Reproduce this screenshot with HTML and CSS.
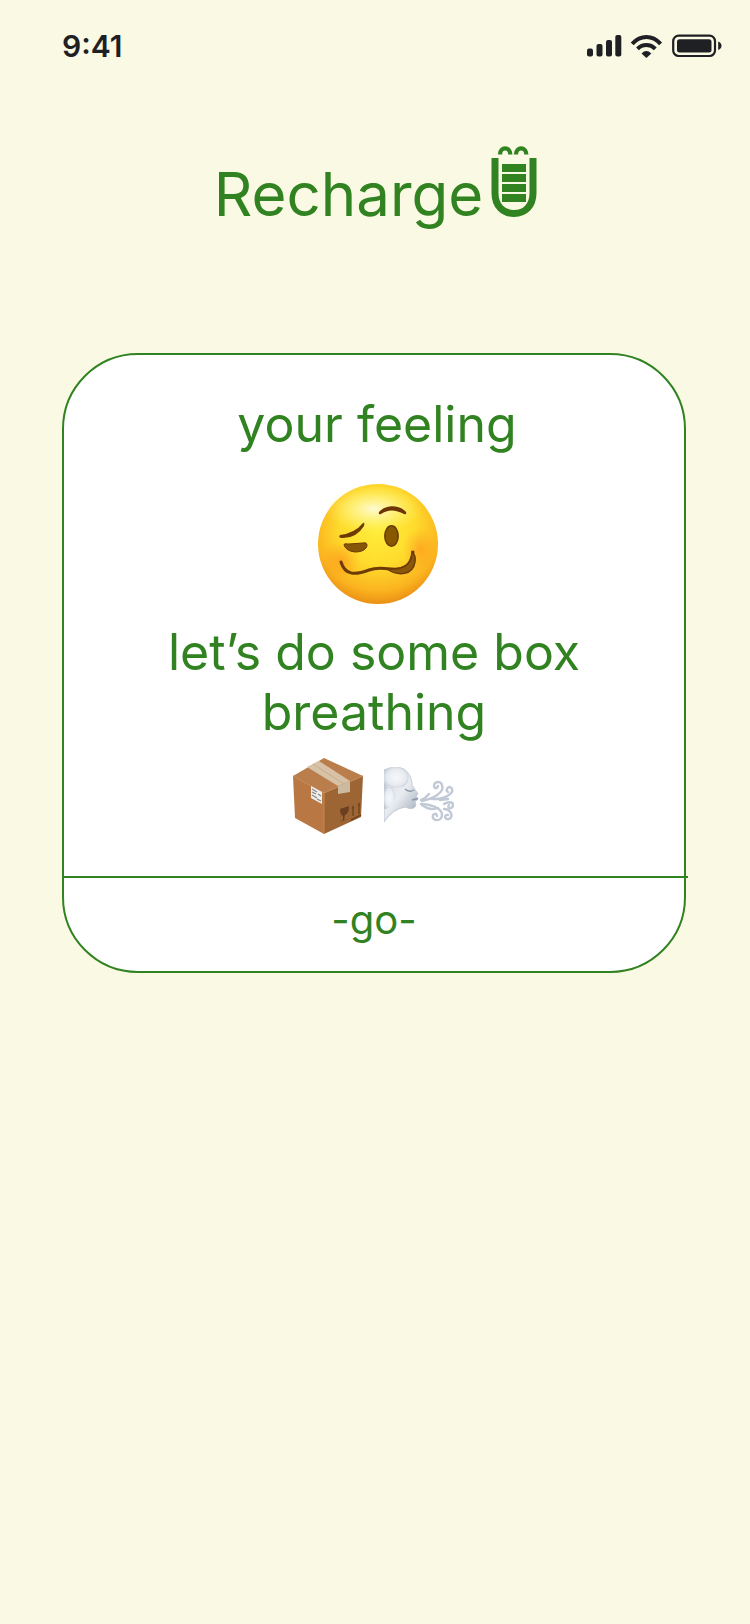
FILE: index.html
```html
<!DOCTYPE html>
<html lang="en">
<head>
<meta charset="utf-8">
<meta name="viewport" content="width=device-width, initial-scale=1">
<title>Recharge</title>
<link rel="stylesheet" href="styles.css">
</head>
<body>
<header class="status">
  <time class="clock">9:41</time>
  <svg class="status-icons" width="136" height="24" viewBox="586 34 136 24" role="img" aria-label="Signal, Wi-Fi and battery">
    <g fill="#1f2024">
      <rect x="587" y="48.500" width="6" height="8" rx="2"/>
      <rect x="596.500" y="44" width="6" height="12.500" rx="2"/>
      <rect x="606" y="40" width="6" height="16.500" rx="2"/>
      <rect x="615.300" y="35" width="6" height="21.500" rx="2"/>
      <path d="M641.500 53.500Q646.400 48.600 651.300 53.500L646.400 57.900Z"/>
      <rect x="677" y="39.200" width="34.500" height="13.200" rx="2.500"/>
      <path d="M718.200 41.500Q721.500 42.800 721.500 45.800T718.200 50.100Z"/>
    </g>
    <g fill="none" stroke="#1f2024">
      <path stroke-width="4" d="M632.200 43.800Q638.500 37 646.400 37T660.600 43.800M637.500 48.800Q641.300 45 646.400 45T655.300 48.800"/>
      <rect x="673.200" y="35.700" width="41.800" height="20.300" rx="5.500" stroke-width="2.200"/>
    </g>
  </svg>
</header>
<main class="page">
  <h1 class="brand">
    <span>Recharge</span>
    <svg class="cup" width="46" height="72" viewBox="0 0 46 72" aria-hidden="true">
      <path d="M4 12V47C4 60 12 67.500 23 67.500S42 60 42 47V12" fill="none" stroke="#318220" stroke-width="7"/>
      <path d="M11 18h24v8H11zM11 28h24v8H11zM11 38h24v8H11zM11 48h24v8H11z" fill="#318220"/>
      <path d="M9 8.500C9 0.300 19.300 0.300 19.300 8.500M25 8.500C25 0.300 35.300 0.300 35.300 8.500" fill="none" stroke="#318220" stroke-width="4.300"/>
    </svg>
  </h1>
  <section class="card">
    <div class="content">
      <h2 class="line feeling">your feeling</h2>
      <svg class="face" width="128" height="122" viewBox="-68 -61 128 122" role="img" aria-label="Woozy face">
        <defs>
          <radialGradient id="skin" cx=".5" cy=".36" r=".66">
            <stop offset="0" stop-color="#ffee3c"/><stop offset=".48" stop-color="#fedb2c"/><stop offset=".8" stop-color="#fbb41f"/><stop offset="1" stop-color="#e88a14"/>
          </radialGradient>
          <radialGradient id="shine">
            <stop offset="0" stop-color="#fffcdc" stop-opacity=".95"/><stop offset=".5" stop-color="#fff79a" stop-opacity=".6"/><stop offset="1" stop-color="#fff36a" stop-opacity="0"/>
          </radialGradient>
          <radialGradient id="blush">
            <stop offset="0" stop-color="#ff861c" stop-opacity=".5"/><stop offset="1" stop-color="#ff901c" stop-opacity="0"/>
          </radialGradient>
        </defs>
        <circle r="60" fill="url(#skin)"/>
        <ellipse cx="-4" cy="-35" rx="48" ry="24" fill="url(#shine)"/>
        <ellipse cx="-37" cy="16" rx="20" ry="19" fill="url(#blush)"/>
        <ellipse cx="42" cy="5" rx="17" ry="22" fill="url(#blush)"/>
        <path d="M-38-9Q-23-11-15-21Q-13-22-14-18Q-22-5-37-6Q-40-7-38-9Z" fill="#6d3a05"/>
        <path d="M1-32C8-40 22-39 28-32Q29-29 26-30Q13-37 3-30Q0-29 1-32Z" fill="#6d3505"/>
        <path d="M-34 1C-34-1-31 0-29 0L-15-1C-11-2-10 1-12 4Q-15 8-23 8Q-32 7-34 1Z" fill="#865608" stroke="#6d3a05" stroke-width="1"/>
        <ellipse cx="13.500" cy="-8" rx="6.700" ry="10.200" fill="#865900" stroke="#6b3b04" stroke-width="1.500"/>
        <path d="M-37 18C-33 32-22 31-9 26C2 22 11 26 20 25Q33 24 35 8" fill="none" stroke="#6d3b05" stroke-width="3" stroke-linecap="round"/>
        <path d="M9 25C27 26 34 20 34 8Q38 11 37 18C35 31 21 33 9 25Z" fill="#8b570b" stroke="#6d3b05" stroke-width="1.500"/>
      </svg>
      <p class="line">let’s do some box breathing</p>
      <div class="pair">
        <svg width="72" height="78" viewBox="0 0 72 78" role="img" aria-label="Package">
          <path d="M1 19L32 1L71 19L32 36Z" fill="#ba7e4c"/>
          <path d="M1 19L32 36V77L3 61Z" fill="#b97843"/>
          <path d="M32 36L71 19L69 60L32 77Z" fill="#9d6434"/>
          <path d="M1 19L32 36L71 19M32 36V77" fill="none" stroke="#c48a56"/>
          <path d="M15 10L27 4L58 24L46 29Z" fill="#d8c2a7"/>
          <path d="M21 7L52 27" stroke="#c9ad8b"/>
          <path d="M46 29L58 24V35L46 37Z" fill="#cdb99d"/>
          <path d="M19 29L30 35V47L19 41Z" fill="#efeeeb"/>
          <path d="M20 32l5 3M20 35l4 2M20 38l5 3M26 37l3 2M25 42l4 2" stroke="#858789" stroke-width="1.200"/>
          <path d="M48 52L57 49Q57 57 53 58L52 63L56 62L48 65L51 63V59Q48 58 48 52Z" fill="#6b4020"/>
          <path d="M61 59V50M67 57V47M59 63L69 58" stroke="#70441f" stroke-width="1.400"/>
          <path d="M59.500 52l1.500-4 1.500 3M65.500 49l1.500-4 1.500 3" fill="#70441f"/>
        </svg>
        <svg width="72" height="58" viewBox="0 0 72 58" role="img" aria-label="Wind blowing face">
          <defs>
            <linearGradient id="cloud" x1="0" y1="0" x2=".8" y2="1">
              <stop offset="0" stop-color="#d9dee6"/><stop offset=".55" stop-color="#e8ecf1"/><stop offset="1" stop-color="#a3acba"/>
            </linearGradient>
            <radialGradient id="puff" cx=".5" cy=".5" r=".6">
              <stop offset="0" stop-color="#f5f7fa"/><stop offset=".65" stop-color="#e7ebf0"/><stop offset="1" stop-color="#c0c8d3"/>
            </radialGradient>
          </defs>
          <path d="M0 3Q12-2 20 2Q28 8 28 18L34 27L32 29L34 32L31 35L32 38Q30 44 21 40Q9 42 0 55Z" fill="url(#cloud)" stroke="#b9c1cd" stroke-width=".8"/>
          <path d="M0 20H8Q15 32 6 39Q4 42 0 42Z" fill="url(#puff)"/>
          <path d="M0 3Q8-2 17 1C29 5 25 21 16 20Q10 22 5 19L0 20Z" fill="url(#puff)"/>
          <path d="M21 22Q25 26 30 23M28 33L34 31.500" fill="none" stroke="#8995a6" stroke-width="1.300"/>
          <g fill="none" stroke="#c0c9d5" stroke-width="2.400" stroke-linecap="round">
            <path d="M37 33Q42 31 45 27M38 34C48 32 61 26 58 18C56 12 47 16 51 21Q53 22 54 19"/>
            <path d="M48 32C59 33 70 27 68 22C66 17 60 23 64 25M56 33L64 32"/>
            <path d="M37 37C47 37 57 41 58 47C59 55 47 55 49 48Q52 45 53 49"/>
            <path d="M38 38Q46 44 54 41M60 37C63 35 69 34 69 38C69 43 62 41 65 38"/>
            <path d="M60 42C67 42 70 50 65 52C60 53 60 47 64 48"/>
          </g>
        </svg>
      </div>
    </div>
    <hr class="divider">
    <button class="go" type="button">-go-</button>
  </section>
</main>
</body>
</html>
```
FILE: styles.css
```css
* { box-sizing: border-box; }

body {
  margin: 0;
  min-height: 100vh;
  background: #faf9e3;
  color: #318220;
  font-family: Inter, "Liberation Sans", sans-serif;
}

.status {
  display: flex;
  align-items: center;
  justify-content: space-between;
  height: 92px;
  padding: 0 28px 0 62px;
  color: #1f2024;
}

.clock {
  font-size: 30px;
  font-weight: 600;
  line-height: 36px;
}

.status-icons, .cup, .face, .pair svg { display: block; }

.page { padding: 54px 64px 40px 62px; }

.brand {
  display: flex;
  justify-content: center;
  align-items: flex-start;
  gap: 8px;
  margin: 0 0 123px;
  padding-left: 3px;
  font-size: 60px;
  font-weight: 400;
  line-height: 72px;
}

.brand span { padding-top: 12px; }

.card {
  border: 2px solid #318220;
  border-radius: 76px;
  background: #fff;
}

.content {
  display: flex;
  flex-direction: column;
  align-items: center;
  padding: 39px 80px 41px;
}

.line {
  margin: 0;
  font-size: 50px;
  font-weight: 400;
  line-height: 60px;
  text-align: center;
}

.feeling {
  margin-bottom: 29px;
  padding-left: 6px;
}

.face { margin-bottom: 17px; }

.pair {
  display: flex;
  align-items: center;
  gap: 20px;
  margin-top: 15px;
}

.divider {
  height: 2px;
  margin: 0 -4px 0 0;
  border: 0;
  background: #318220;
}

.go {
  display: block;
  width: 100%;
  padding: 18px 0 27px;
  border: 0;
  border-radius: 0 0 74px 74px;
  background: transparent;
  color: inherit;
  font: 400 40px/48px Inter, "Liberation Sans", sans-serif;
  cursor: pointer;
}
```
